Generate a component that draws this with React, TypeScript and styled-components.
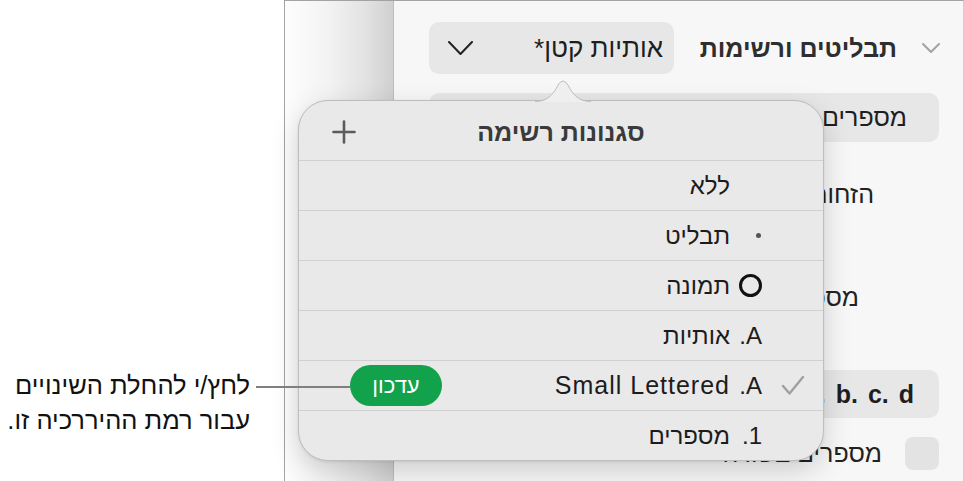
import styled, { createGlobalStyle } from "styled-components";

const GlobalStyle = createGlobalStyle`
  html, body {
    margin: 0;
    padding: 0;
    background: #fff;
  }
  body {
    font-family: "Liberation Sans", "DejaVu Sans", sans-serif;
    -webkit-font-smoothing: antialiased;
  }
`;

const Page = styled.div`
  position: relative;
  display: flex;
  width: 964px;
  height: 481px;
  overflow: hidden;
  background: #fff;
`;

const Callout = styled.div`
  flex: none;
  width: 284px;
  box-sizing: border-box;
  display: flex;
  flex-direction: column;
  justify-content: flex-end;
  padding: 0 34px 43px 0;
  direction: rtl;
  font-size: 25.5px;
  line-height: 35px;
  color: #111;
`;

const Leader = styled.div`
  position: absolute;
  left: 256px;
  top: 386px;
  width: 94px;
  height: 2px;
  background: #7f7f7f;
  z-index: 3;
`;

const Window = styled.div`
  position: relative;
  flex: 1;
  display: flex;
  border-top: 1px solid #a3a3a3;
  border-left: 1px solid #a3a3a3;
  border-right: 1px solid #cfcfcf;
`;

const CanvasEdge = styled.div`
  flex: none;
  width: 108px;
  background: linear-gradient(
    to right,
    #fdfdfd 0%,
    #f3f3f3 40%,
    #e2e2e2 75%,
    #d0d0d0 100%
  );
`;

const Sidebar = styled.div`
  flex: 1;
  display: flex;
  flex-direction: column;
  padding: 21px 24px 0 35px;
  border-left: 1px solid #bdbdbd;
  background: #f7f7f7;
  direction: rtl;
  color: #222;
  font-size: 25px;
`;

const HeaderRow = styled.div`
  display: flex;
  align-items: center;
  height: 52px;
`;

const Disclosure = styled.svg`
  flex: none;
  margin-right: -2px;
`;

const SectionTitle = styled.div`
  margin-right: 24px;
  font-weight: 700;
  font-size: 25px;
  color: #2e2e2e;
`;

const Dropdown = styled.div`
  margin-right: auto;
  width: 245px;
  height: 52px;
  box-sizing: border-box;
  display: flex;
  align-items: center;
  justify-content: space-between;
  padding: 0 11px 0 19px;
  border-radius: 10px;
  background: #e7e7e7;
  color: #1e1e1e;
  font-size: 26px;
`;

const SelectButton = styled.div<{ $top: number; $height: number; $pad: number; $bold?: boolean }>`
  margin-top: ${(p) => p.$top}px;
  height: ${(p) => p.$height}px;
  display: flex;
  align-items: center;
  padding-right: ${(p) => p.$pad}px;
  border-radius: 10px;
  background: #e7e7e7;
  color: #1e1e1e;
  font-weight: ${(p) => (p.$bold ? 700 : 400)};
  word-spacing: ${(p) => (p.$bold ? "3px" : "0")};
  white-space: nowrap;
`;

const FieldLabel = styled.div<{ $top: number; $indent: number }>`
  margin-top: ${(p) => p.$top}px;
  padding-right: ${(p) => p.$indent}px;
  height: 30px;
  line-height: 30px;
  white-space: nowrap;
`;

const CheckRow = styled.div`
  margin-top: 19px;
  display: flex;
  align-items: center;
  gap: 23px;
`;

const CheckBox = styled.div`
  flex: none;
  width: 34px;
  height: 33px;
  border-radius: 8px;
  background: #e3e3e3;
`;

const Popover = styled.div`
  position: absolute;
  left: 13px;
  top: 99px;
  width: 526px;
  box-sizing: border-box;
  background: #e9e9e9;
  border: 1px solid #bdbdbd;
  border-radius: 30px;
  box-shadow: 0 10px 28px rgba(0, 0, 0, 0.17), 0 1px 3px rgba(0, 0, 0, 0.08);
  direction: rtl;
  z-index: 2;
`;

const Tail = styled.svg`
  position: absolute;
  left: 236px;
  top: -23px;
`;

const PopoverHeader = styled.div`
  height: 60px;
  display: grid;
  grid-template-columns: 1fr auto 1fr;
  align-items: center;
  padding-top: 3px;
  box-sizing: border-box;
  border-bottom: 1px solid #d0d0d0;
`;

const PopoverTitle = styled.div`
  grid-column: 2;
  font-weight: 700;
  font-size: 25px;
  color: #3a3a3a;
`;

const AddButton = styled.svg`
  grid-column: 3;
  justify-self: end;
  margin-left: 33px;
`;

const StyleRow = styled.div<{ $last?: boolean }>`
  height: 49px;
  display: flex;
  align-items: center;
  border-bottom: ${(p) => (p.$last ? "none" : "1px solid #d0d0d0")};
  font-size: 24px;
  color: #1c1c1c;
`;

const CheckCell = styled.div`
  flex: none;
  width: 61px;
  box-sizing: border-box;
  padding-right: 18px;
  display: flex;
  align-items: center;
`;

const MarkerCell = styled.div`
  flex: none;
  width: 24px;
  display: flex;
  align-items: center;
  justify-content: flex-start;
  white-space: nowrap;
`;

const StyleName = styled.div<{ $latin?: boolean }>`
  margin-right: 8px;
  white-space: nowrap;
  font-size: ${(p) => (p.$latin ? 25 : 24)}px;
  letter-spacing: ${(p) => (p.$latin ? "1px" : "0")};
`;

const Bullet = styled.span`
  width: 5px;
  height: 5px;
  margin-right: 1px;
  border-radius: 50%;
  background: #555;
`;

const Ring = styled.span`
  width: 23px;
  height: 23px;
  box-sizing: border-box;
  border: 3px solid #111;
  border-radius: 50%;
`;

const UpdateButton = styled.div`
  margin-right: auto;
  margin-left: 51px;
  width: 92px;
  height: 41px;
  display: flex;
  align-items: center;
  justify-content: center;
  border-radius: 21px;
  background: #13a24c;
  color: #fff;
  font-size: 22px;
`;

const Chevron = ({ color, w, h, sw }: { color: string; w: number; h: number; sw: number }) => (
  <svg width={w} height={h} viewBox={`0 0 ${w} ${h}`}>
    <polyline
      points={`1,1 ${w / 2},${h - 1} ${w - 1},1`}
      fill="none"
      stroke={color}
      strokeWidth={sw}
      strokeLinecap="round"
      strokeLinejoin="round"
    />
  </svg>
);

const styles = [
  { marker: null, name: "ללא" },
  { marker: "bullet", name: "תבליט" },
  { marker: "ring", name: "תמונה" },
  { marker: "A.", name: "אותיות" },
  { marker: "A.", name: "Small Lettered", selected: true, latin: true },
  { marker: "1.", name: "מספרים" },
];

function Marker({ kind }: { kind: string | null }) {
  if (kind === "bullet") return <Bullet />;
  if (kind === "ring") return <Ring />;
  return <>{kind}</>;
}

export default function App() {
  return (
    <Page>
      <GlobalStyle />
      <Callout>
        <div>לחץ/י להחלת השינויים</div>
        <div>עבור רמת ההיררכיה זו.</div>
      </Callout>
      <Leader />

      <Window>
        <CanvasEdge />
        <Sidebar>
          <HeaderRow>
            <Disclosure width="20" height="12" viewBox="0 0 20 12">
              <polyline
                points="2,2 10,10 18,2"
                fill="none"
                stroke="#a2a2a2"
                strokeWidth="2"
                strokeLinecap="round"
                strokeLinejoin="round"
              />
            </Disclosure>
            <SectionTitle>תבליטים ורשימות</SectionTitle>
            <Dropdown>
              <span>אותיות קטן*</span>
              <Chevron color="#222" w={25} h={14} sw={2} />
            </Dropdown>
          </HeaderRow>

          <SelectButton $top={19} $height={49} $pad={32}>
            מספרים
          </SelectButton>
          <FieldLabel $top={37} $indent={65}>
            הזחות
          </FieldLabel>
          <FieldLabel $top={73} $indent={80}>
            מספור
          </FieldLabel>
          <SelectButton $top={58} $height={48} $pad={25} $bold>
            <span dir="ltr">a. b. c. d</span>
          </SelectButton>
          <CheckRow>
            <CheckBox />
            <span>מספרים בשורה</span>
          </CheckRow>
        </Sidebar>

        <Popover>
          <Tail width="56" height="24" viewBox="0 0 56 24">
            <path
              d="M0 24 C 12 24, 18 17, 23 7 Q 28 -1, 33 7 C 38 17, 44 24, 56 24 Z"
              fill="#efefef"
            />
            <path
              d="M0 23.5 C 12 23.5, 18 17, 23 7 Q 28 -1, 33 7 C 38 17, 44 23.5, 56 23.5"
              fill="none"
              stroke="#bdbdbd"
              strokeWidth="1"
            />
          </Tail>
          <PopoverHeader>
            <PopoverTitle>סגנונות רשימה</PopoverTitle>
            <AddButton width="24" height="24" viewBox="0 0 24 24">
              <path
                d="M12 1.5 V22.5 M1.5 12 H22.5"
                stroke="#5b5b5b"
                strokeWidth="2.6"
                strokeLinecap="round"
              />
            </AddButton>
          </PopoverHeader>
          {styles.map((s, i) => (
            <StyleRow key={s.name} $last={i === styles.length - 1}>
              <CheckCell>
                {s.selected && (
                  <svg width="24" height="21" viewBox="0 0 24 21">
                    <polyline
                      points="2,11 8.5,18.5 22,2"
                      fill="none"
                      stroke="#a0a0a0"
                      strokeWidth="2.4"
                      strokeLinecap="round"
                      strokeLinejoin="round"
                    />
                  </svg>
                )}
              </CheckCell>
              <MarkerCell>
                <Marker kind={s.marker} />
              </MarkerCell>
              <StyleName $latin={s.latin}>{s.name}</StyleName>
              {s.selected && <UpdateButton>עדכון</UpdateButton>}
            </StyleRow>
          ))}
        </Popover>
      </Window>
    </Page>
  );
}
